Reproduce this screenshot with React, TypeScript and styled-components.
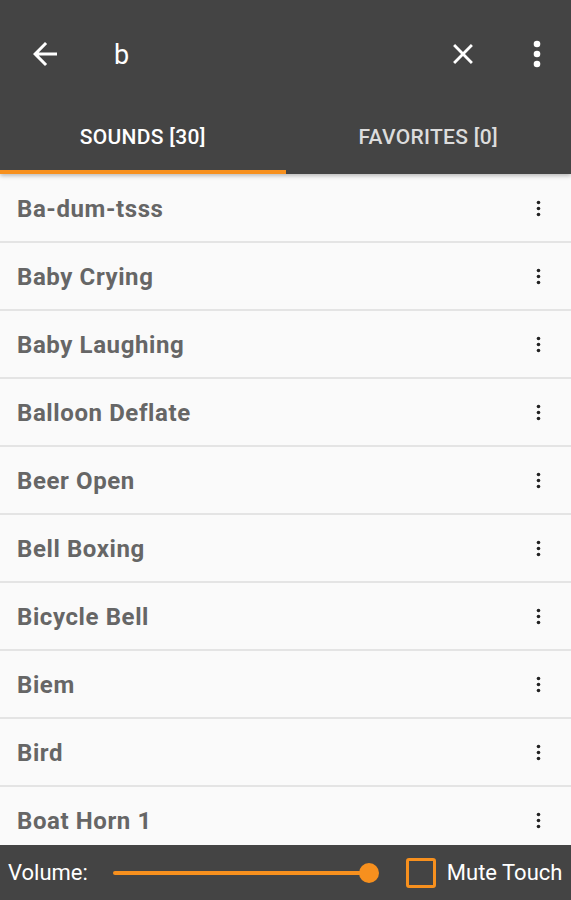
import styled, { createGlobalStyle } from 'styled-components';

const GlobalStyle = createGlobalStyle`
  html, body {
    margin: 0;
    padding: 0;
    background: #fafafa;
    font-family: Roboto, "Liberation Sans", sans-serif;
  }
`;

const ORANGE = '#f7901e';

const Page = styled.div`
  width: 571px;
  height: 900px;
  display: flex;
  flex-direction: column;
  overflow: hidden;
  background: #fafafa;
`;

const Header = styled.header`
  background: #444444;
  flex-shrink: 0;
  box-shadow: 0 2px 4px rgba(0, 0, 0, 0.25);
  position: relative;
  z-index: 1;
`;

const Toolbar = styled.div`
  height: 108px;
  display: flex;
  align-items: center;
  padding: 0 16px 0 27px;
`;

const IconButton = styled.div<{ $gap?: number }>`
  display: flex;
  align-items: center;
  justify-content: center;
  width: 36px;
  height: 36px;
  color: #ffffff;
  margin-left: ${({ $gap }) => $gap ?? 0}px;
`;

const Query = styled.div`
  flex: 1;
  color: #ffffff;
  font-size: 27px;
  margin-left: 51px;
  padding-top: 2px;
`;

const Tabs = styled.div`
  display: flex;
  height: 66px;
`;

const Tab = styled.div<{ $active?: boolean }>`
  flex: 1;
  display: flex;
  align-items: center;
  justify-content: center;
  font-size: 21px;
  font-weight: 500;
  letter-spacing: 0.3px;
  color: ${({ $active }) => ($active ? '#ffffff' : '#dcdcdc')};
  border-bottom: 4px solid ${({ $active }) => ($active ? ORANGE : 'transparent')};
  padding-bottom: 4px;
  box-sizing: border-box;
`;

const List = styled.div`
  flex: 1;
  overflow: hidden;
  padding-top: 1px;
`;

const Row = styled.div`
  height: 66px;
  display: flex;
  align-items: center;
  justify-content: space-between;
  padding: 0 30px 0 17px;
  border-bottom: 2px solid #e4e4e4;
  background: #fafafa;
`;

const Name = styled.span`
  font-size: 24px;
  font-weight: bold;
  letter-spacing: 0.6px;
  color: #666666;
  padding-top: 2px;
`;

const Footer = styled.footer`
  height: 55px;
  flex-shrink: 0;
  background: #444444;
  display: flex;
  align-items: center;
  padding: 0 8px;
  color: #ffffff;
  font-size: 22px;
`;

const Slider = styled.div`
  position: relative;
  width: 256px;
  height: 4px;
  margin-left: 25px;
  margin-right: 37px;
  background: ${ORANGE};
  border-radius: 2px;
`;

const Thumb = styled.div`
  position: absolute;
  right: -10px;
  top: -8px;
  width: 20px;
  height: 20px;
  border-radius: 50%;
  background: ${ORANGE};
`;

const Check = styled.div`
  width: 24px;
  height: 24px;
  border: 3px solid ${ORANGE};
  border-radius: 3px;
  margin-right: 11px;
`;

const Dots = () => (
  <svg width="5" height="17" viewBox="0 0 5 17">
    <circle cx="2.5" cy="2.5" r="1.8" fill="#222" />
    <circle cx="2.5" cy="8.5" r="1.8" fill="#222" />
    <circle cx="2.5" cy="14.5" r="1.8" fill="#222" />
  </svg>
);

const sounds = [
  'Ba-dum-tsss',
  'Baby Crying',
  'Baby Laughing',
  'Balloon Deflate',
  'Beer Open',
  'Bell Boxing',
  'Bicycle Bell',
  'Biem',
  'Bird',
  'Boat Horn 1',
];

export default function App() {
  return (
    <Page>
      <GlobalStyle />
      <Header>
        <Toolbar>
          <IconButton>
            <svg width="36" height="36" viewBox="0 0 24 24" fill="#fff">
              <path d="M20 11H7.83l5.59-5.59L12 4l-8 8 8 8 1.41-1.41L7.83 13H20v-2z" />
            </svg>
          </IconButton>
          <Query>b</Query>
          <IconButton>
            <svg width="34" height="34" viewBox="0 0 24 24" fill="#fff">
              <path d="M19 6.41 17.59 5 12 10.59 6.41 5 5 6.41 10.59 12 5 17.59 6.41 19 12 13.41 17.59 19 19 17.59 13.41 12z" />
            </svg>
          </IconButton>
          <IconButton $gap={38}>
            <svg width="8" height="28" viewBox="0 0 8 28" fill="#fff">
              <circle cx="4" cy="4" r="3.3" />
              <circle cx="4" cy="14" r="3.3" />
              <circle cx="4" cy="24" r="3.3" />
            </svg>
          </IconButton>
        </Toolbar>
        <Tabs>
          <Tab $active>SOUNDS [30]</Tab>
          <Tab>FAVORITES [0]</Tab>
        </Tabs>
      </Header>
      <List>
        {sounds.map((s) => (
          <Row key={s}>
            <Name>{s}</Name>
            <Dots />
          </Row>
        ))}
      </List>
      <Footer>
        <span>Volume:</span>
        <Slider>
          <Thumb />
        </Slider>
        <Check />
        <span>Mute Touch</span>
      </Footer>
    </Page>
  );
}
